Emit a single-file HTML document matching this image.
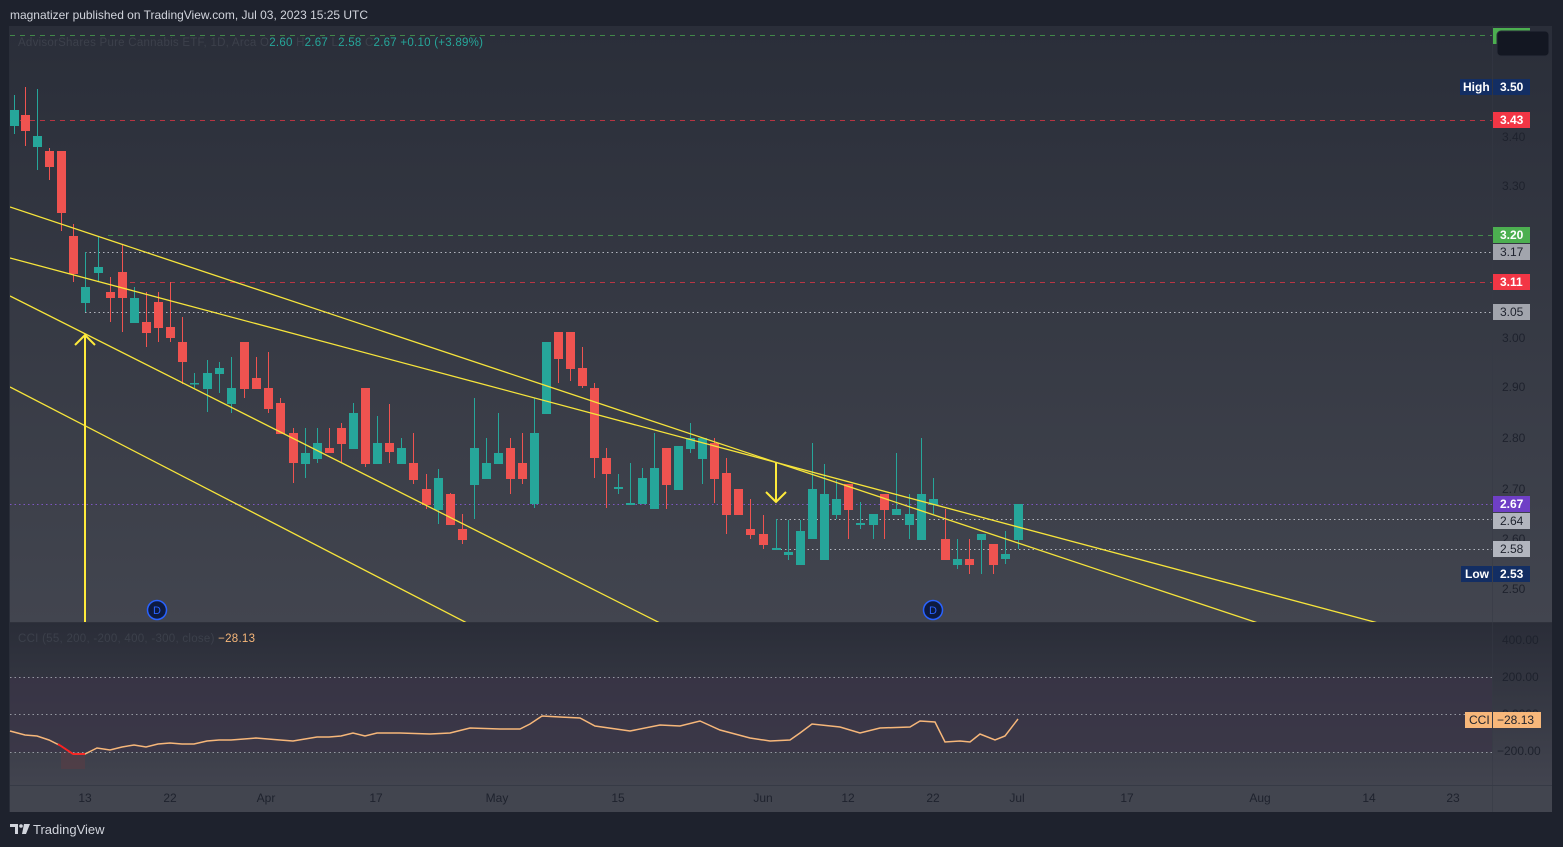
<!DOCTYPE html>
<html><head><meta charset="utf-8"><style>
html,body{margin:0;padding:0;background:#1e222d;width:1563px;height:847px;overflow:hidden;font-family:"Liberation Sans",sans-serif}
svg{position:absolute;left:0;top:0}
</style></head><body>
<svg id="s" width="1563" height="847" viewBox="0 0 1563 847" xmlns="http://www.w3.org/2000/svg" font-family="Liberation Sans, sans-serif">
<defs>
<linearGradient id="g1" x1="0" y1="0" x2="0" y2="1"><stop offset="0" stop-color="#2a2e39"/><stop offset="1" stop-color="#42454f"/></linearGradient>
<linearGradient id="g2" x1="0" y1="0" x2="0" y2="1"><stop offset="0" stop-color="#2a2d38"/><stop offset="1" stop-color="#42444f"/></linearGradient>
</defs>
<rect x="0" y="0" width="1563" height="847" fill="#1e222d"/>
<text x="10" y="19" font-size="12" fill="#d1d4dc" textLength="358" lengthAdjust="spacingAndGlyphs">magnatizer published on TradingView.com, Jul 03, 2023 15:25 UTC</text>
<rect x="9" y="26" width="1543" height="597" fill="url(#g1)"/>
<rect x="9" y="623" width="1543" height="163" fill="url(#g2)"/>
<rect x="9" y="786" width="1543" height="26" fill="#42454f"/>
<line x1="9" y1="785.5" x2="1552" y2="785.5" stroke="#363a45"/>
<line x1="9" y1="622.5" x2="1552" y2="622.5" stroke="#2f323c"/>
<line x1="9.5" y1="26" x2="9.5" y2="812" stroke="#2a2e39"/>
<rect x="10" y="677" width="1482" height="75" fill="#3b3447" opacity="0.7"/>
<rect x="61" y="752" width="24" height="17" fill="#5a3c45" opacity="0.6"/>
<g stroke="#9598a1" stroke-dasharray="1.5,3" stroke-width="1">
<line x1="10" y1="677.5" x2="1492" y2="677.5"/>
<line x1="10" y1="714.5" x2="1492" y2="714.5"/>
<line x1="10" y1="752.5" x2="1492" y2="752.5"/>
</g>
<line x1="10" y1="35.5" x2="1492" y2="35.5" stroke="#4caf50" stroke-dasharray="5,5" opacity="0.7"/>
<line x1="10" y1="120.5" x2="1492" y2="120.5" stroke="#f23645" stroke-dasharray="5,5" opacity="0.7"/>
<line x1="108" y1="235.5" x2="1492" y2="235.5" stroke="#4caf50" stroke-dasharray="5,5" opacity="0.7"/>
<line x1="85" y1="252.5" x2="1492" y2="252.5" stroke="#b2b5be" stroke-dasharray="1.5,3"/>
<line x1="120" y1="282.5" x2="1492" y2="282.5" stroke="#f23645" stroke-dasharray="5,5" opacity="0.7"/>
<line x1="85" y1="312.5" x2="1492" y2="312.5" stroke="#b2b5be" stroke-dasharray="1.5,3"/>
<line x1="10" y1="504.5" x2="1492" y2="504.5" stroke="#7e57c2" stroke-dasharray="1.5,3"/>
<line x1="776" y1="519.5" x2="1492" y2="519.5" stroke="#b2b5be" stroke-dasharray="1.5,3"/>
<line x1="776" y1="549.5" x2="1492" y2="549.5" stroke="#b2b5be" stroke-dasharray="1.5,3"/>
<g id="candles"></g>
<g stroke="#f7e53b" stroke-width="1.3" clip-path="url(#cp)">
<line x1="10" y1="207" x2="1258" y2="623"/>
<line x1="10" y1="258" x2="1378" y2="623"/>
<line x1="10" y1="296" x2="660" y2="623"/>
<line x1="10" y1="387" x2="467" y2="623"/>
</g>
<g stroke="#ffeb3b" stroke-width="2" fill="none">
<line x1="85" y1="622" x2="85" y2="335"/>
<polyline points="75,345 85,335 95,345"/>
<line x1="776" y1="463" x2="776" y2="502"/>
<polyline points="766,492 776,502 786,492"/>
</g>
<g font-size="11" text-anchor="middle">
<circle cx="157" cy="610" r="9.5" fill="#0d1a40" stroke="#2962ff" stroke-width="1.5"/><text x="157" y="614" fill="#2962ff">D</text>
<circle cx="933" cy="610" r="9.5" fill="#0d1a40" stroke="#2962ff" stroke-width="1.5"/><text x="933" y="614" fill="#2962ff">D</text>
</g>
<polyline id="cci" fill="none" stroke="#f7b77a" stroke-width="1.5" points=""/>
<polyline fill="none" stroke="#ff1f1f" stroke-width="1.8" points="58,744 61,746 73,754 85,754"/>
<text x="18" y="46" font-size="11.5" fill="#3c404b" textLength="465" lengthAdjust="spacing">AdvisorShares Pure Cannabis ETF, 1D, Arca  O<tspan fill="#26a69a">2.60</tspan>  H<tspan fill="#26a69a">2.67</tspan>  L<tspan fill="#26a69a">2.58</tspan>  C<tspan fill="#26a69a">2.67</tspan>  <tspan fill="#26a69a">+0.10 (+3.89%)</tspan></text>
<text x="18" y="642" font-size="11.5" fill="#3c404b" textLength="237" lengthAdjust="spacing">CCI (55, 200, -200, 400, -300, close)  <tspan fill="#f7b77a">−28.13</tspan></text>
<line x1="1492.5" y1="26" x2="1492.5" y2="812" stroke="#363a45" opacity="0.5"/>
<g font-size="12" fill="#1e222d" text-anchor="start">
<text x="1502" y="141">3.40</text><text x="1502" y="190">3.30</text>
<text x="1502" y="342">3.00</text><text x="1502" y="391">2.90</text><text x="1502" y="442">2.80</text>
<text x="1502" y="493">2.70</text><text x="1502" y="543">2.60</text><text x="1502" y="593">2.50</text>
<text x="1502" y="644">400.00</text><text x="1502" y="681">200.00</text><text x="1502" y="718">0.0000</text><text x="1497" y="755">−200.00</text>
</g>
<rect x="1493" y="28" width="37" height="16" fill="#4caf50"/>
<rect x="1497" y="31" width="52" height="25" rx="4" fill="#131722" stroke="#2a2e39"/>
<g font-size="12" font-weight="bold">
<rect x="1460" y="79" width="32" height="16" fill="#132e63"/><text x="1463" y="91" fill="#fff">High</text>
<rect x="1493" y="79" width="37" height="16" fill="#132e63"/><text x="1500" y="91" fill="#fff">3.50</text>
<rect x="1493" y="112" width="37" height="16" fill="#f23645"/><text x="1500" y="124" fill="#fff">3.43</text>
<rect x="1493" y="227" width="37" height="16" fill="#4caf50"/><text x="1500" y="239" fill="#fff">3.20</text>
<rect x="1493" y="244" width="37" height="16" fill="#a2a5ad"/><text x="1500" y="256" fill="#1e222d" font-weight="normal">3.17</text>
<rect x="1493" y="274" width="37" height="16" fill="#f23645"/><text x="1500" y="286" fill="#fff">3.11</text>
<rect x="1493" y="304" width="37" height="16" fill="#a2a5ad"/><text x="1500" y="316" fill="#1e222d" font-weight="normal">3.05</text>
<rect x="1493" y="496" width="37" height="16" fill="#6f3fc6"/><text x="1500" y="508" fill="#fff">2.67</text>
<rect x="1493" y="513" width="37" height="16" fill="#b2b5be"/><text x="1500" y="525" fill="#1e222d" font-weight="normal">2.64</text>
<rect x="1493" y="541" width="37" height="16" fill="#b2b5be"/><text x="1500" y="553" fill="#1e222d" font-weight="normal">2.58</text>
<rect x="1461" y="566" width="31" height="16" fill="#132e63"/><text x="1465" y="578" fill="#fff">Low</text>
<rect x="1493" y="566" width="37" height="16" fill="#132e63"/><text x="1500" y="578" fill="#fff">2.53</text>
</g>
<g font-size="12">
<rect x="1465" y="712" width="27" height="16" fill="#f7b77a"/><text x="1469" y="724" fill="#1e222d">CCI</text>
<rect x="1493" y="712" width="48" height="16" fill="#f7b77a"/><text x="1497" y="724" fill="#1e222d">−28.13</text>
</g>
<g font-size="12" fill="#1e222d" text-anchor="middle">
<text x="85" y="802">13</text><text x="170" y="802">22</text><text x="266" y="802">Apr</text><text x="376" y="802">17</text>
<text x="497" y="802">May</text><text x="618" y="802">15</text><text x="763" y="802">Jun</text><text x="848" y="802">12</text>
<text x="933" y="802">22</text><text x="1017" y="802">Jul</text><text x="1127" y="802">17</text><text x="1260" y="802">Aug</text>
<text x="1369" y="802">14</text><text x="1453" y="802">23</text>
</g>
<g fill="#d1d4dc"><path d="M10 824h8v10h-3v-7h-5z"/><circle cx="21" cy="826" r="1.8"/><path d="M24 824h6l-4 10h-4z"/></g>
<text x="33" y="834" font-size="13" fill="#d1d4dc">TradingView</text>
<clipPath id="cp"><rect x="10" y="26" width="1482" height="596"/></clipPath>
</svg>
<script>
var C=[[14,110,126,95,134,1],[25,115,131,87,146,0],[37,136,147,89,170,1],[49,151,167,148,180,0],[61,151,213,151,231,0],[73,236,274,224,282,0],[85,287,303,252,312,1],[98,267,273,236,282,1],[110,292,298,277,322,0],[122,272,298,245,332,0],[134,298,323,287,323,1],[146,322,333,292,347,0],[158,302,328,292,342,0],[170,327,338,282,342,0],[182,342,362,317,384,0],[194,383,384,373,388,1],[207,373,389,360,412,1],[219,368,374,362,393,1],[231,388,404,357,413,1],[244,342,389,342,398,0],[256,378,389,357,389,0],[268,388,409,352,413,0],[280,403,434,398,434,0],[293,433,463,428,483,0],[305,453,464,428,478,1],[317,443,459,428,463,1],[329,448,453,428,453,0],[341,428,444,423,463,0],[353,413,449,403,449,1],[365,388,464,388,467,0],[377,443,464,416,464,1],[389,443,452,404,463,0],[401,448,464,438,464,1],[413,463,480,433,484,0],[426,489,505,474,509,0],[438,478,510,469,524,1],[450,494,525,493,525,0],[462,529,540,514,544,0],[474,448,485,398,519,1],[486,463,479,438,479,1],[498,453,464,413,464,1],[510,448,479,438,494,0],[522,463,479,433,484,0],[534,433,504,398,508,1],[546,342,414,342,414,1],[558,332,359,332,383,0],[570,332,369,332,381,0],[582,368,386,347,388,0],[594,388,458,383,478,0],[606,458,474,448,508,0],[618,487,489,474,494,1],[630,503,505,463,505,1],[642,478,504,468,504,1],[654,468,509,433,509,1],[666,448,485,448,509,0],[678,446,490,446,490,1],[690,438,449,423,453,1],[702,438,459,438,484,1],[714,443,479,438,503,0],[726,473,515,458,534,0],[738,489,515,489,515,0],[750,529,535,499,539,0],[763,534,545,515,549,0],[776,548,550,519,550,1],[788,552,555,520,560,1],[800,531,565,520,565,1],[812,489,539,443,539,1],[824,494,560,464,560,1],[836,499,515,480,519,1],[848,484,510,484,539,0],[860,523,525,502,529,1],[873,514,525,514,539,1],[884,494,510,494,539,0],[896,509,515,453,515,1],[909,514,525,494,539,1],[921,494,540,438,540,1],[933,499,505,478,514,1],[945,539,560,509,560,0],[957,559,565,539,569,1],[969,559,565,539,574,0],[981,534,540,534,574,1],[993,544,565,544,574,0],[1005,554,559,531,564,1],[1018,504,540,504,549,1]];
var ns="http://www.w3.org/2000/svg",g=document.getElementById("candles");
C.forEach(function(c){var col=c[5]?"#26a69a":"#ef5350";
var l=document.createElementNS(ns,"line");l.setAttribute("x1",c[0]+.5);l.setAttribute("x2",c[0]+.5);l.setAttribute("y1",c[3]);l.setAttribute("y2",c[4]);l.setAttribute("stroke",col);g.appendChild(l);
var r=document.createElementNS(ns,"rect");r.setAttribute("x",c[0]-4);r.setAttribute("width",9);r.setAttribute("y",c[1]);r.setAttribute("height",Math.max(1.5,c[2]-c[1]));r.setAttribute("fill",col);g.appendChild(r);});
var P=[[10,731],[25,735],[37,736],[49,740],[61,746],[73,754],[85,754],[97,748],[110,750],[122,747],[134,745],[146,747],[158,744],[170,743],[182,744],[194,744],[207,741],[219,740],[231,740],[244,739],[256,738],[268,739],[280,740],[293,741],[305,739],[317,737],[329,737],[341,736],[353,733],[365,736],[377,733],[400,733],[430,734],[450,733],[470,728],[500,729],[520,729],[530,724],[542,716],[560,717],[580,718],[595,726],[630,731],[660,725],[680,726],[700,721],[720,730],[750,738],[770,741],[790,740],[800,733],[812,724],[840,727],[860,733],[880,728],[910,727],[920,721],[935,722],[945,742],[960,741],[970,742],[980,734],[995,740],[1005,736],[1018,719]];
document.getElementById("cci").setAttribute("points",P.map(function(p){return p.join(",")}).join(" "));
</script>
</body></html>
